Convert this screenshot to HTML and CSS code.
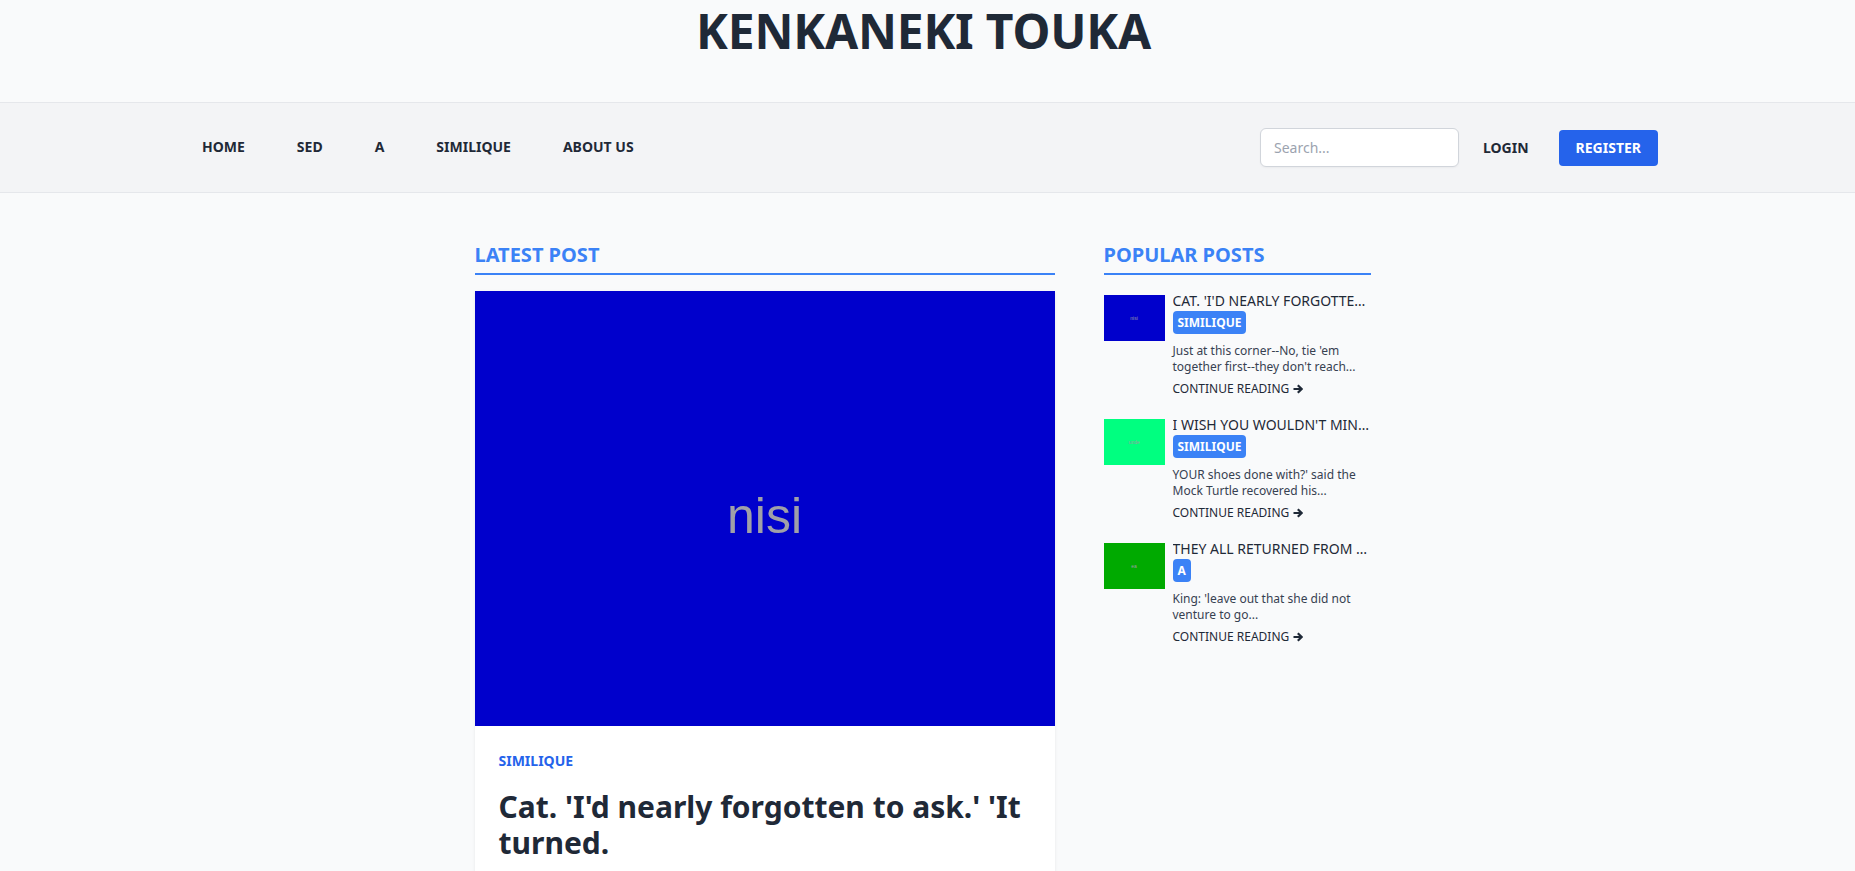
FILE: index.html
```html
<!DOCTYPE html>
<html lang="en">
<head>
<meta charset="utf-8">
<title>Kenkaneki Touka</title>
<link rel="stylesheet" href="styles.css">
</head>
<body>
<header class="site-header">
  <h1 class="site-title">KENKANEKI TOUKA</h1>
</header>
<nav class="navbar">
  <div class="nav-inner">
    <ul class="nav-links">
      <li><a href="#">HOME</a></li>
      <li><a href="#">SED</a></li>
      <li><a href="#">A</a></li>
      <li><a href="#">SIMILIQUE</a></li>
      <li><a href="#">ABOUT US</a></li>
    </ul>
    <div class="nav-actions">
      <input class="search" type="text" placeholder="Search...">
      <a class="login" href="#">LOGIN</a>
      <a class="register" href="#">REGISTER</a>
    </div>
  </div>
</nav>
<main class="page">
  <section class="latest">
    <h2 class="section-title">LATEST POST</h2>
    <article class="card">
      <div class="hero"><span>nisi</span></div>
      <div class="card-body">
        <a class="category" href="#">SIMILIQUE</a>
        <h3 class="post-title">Cat. 'I'd nearly forgotten to ask.' 'It turned.</h3>
        <p class="post-excerpt">Just at this corner--No, tie 'em together first--they don't reach half high enough yet--Oh! they'll do well enough; don't be particular--Here, Bill! catch hold of this rope--Will the roof bear?</p>
      </div>
    </article>
  </section>
  <aside class="sidebar">
    <h2 class="section-title">POPULAR POSTS</h2>
    <div class="pop-item">
      <div class="thumb thumb-blue"><span>nisi</span></div>
      <div class="pop-body">
        <div class="pop-title">CAT. 'I'D NEARLY FORGOTTEN TO ASK.' 'IT TURNED.</div>
        <span class="badge">SIMILIQUE</span>
        <p class="pop-excerpt">Just at this corner--No, tie 'em together first--they don't reach...</p>
        <a class="continue" href="#">CONTINUE READING <svg class="arrow" viewBox="0 0 10 10" width="10" height="10"><path d="M0.5 5H8.3M4.8 1.3L8.6 5L4.8 8.7" fill="none" stroke="currentColor" stroke-width="2.2"/></svg></a>
      </div>
    </div>
    <div class="pop-item">
      <div class="thumb thumb-mint"><span>unde</span></div>
      <div class="pop-body">
        <div class="pop-title">I WISH YOU WOULDN'T MIND ME ASKING.</div>
        <span class="badge">SIMILIQUE</span>
        <p class="pop-excerpt">YOUR shoes done with?' said the Mock Turtle recovered his...</p>
        <a class="continue" href="#">CONTINUE READING <svg class="arrow" viewBox="0 0 10 10" width="10" height="10"><path d="M0.5 5H8.3M4.8 1.3L8.6 5L4.8 8.7" fill="none" stroke="currentColor" stroke-width="2.2"/></svg></a>
      </div>
    </div>
    <div class="pop-item">
      <div class="thumb thumb-green"><span>ea</span></div>
      <div class="pop-body">
        <div class="pop-title">THEY ALL RETURNED FROM HIM TO YOU.</div>
        <span class="badge">A</span>
        <p class="pop-excerpt">King: 'leave out that she did not venture to go...</p>
        <a class="continue" href="#">CONTINUE READING <svg class="arrow" viewBox="0 0 10 10" width="10" height="10"><path d="M0.5 5H8.3M4.8 1.3L8.6 5L4.8 8.7" fill="none" stroke="currentColor" stroke-width="2.2"/></svg></a>
      </div>
    </div>
  </aside>
</main>
</body>
</html>
```

FILE: styles.css
```css
html {
  scrollbar-width: none;
}
* {
  box-sizing: border-box;
}
body {
  margin: 0;
  background: #f9fafb;
  color: #1f2937;
  font-family: "Noto Sans", "Open Sans", sans-serif;
}
a {
  color: inherit;
  text-decoration: none;
}

.site-header {
  height: 102px;
  padding-top: 7px;
  padding-right: 8px;
}
.site-title {
  margin: 0;
  text-align: center;
  font-size: 48px;
  line-height: 48px;
  font-weight: 700;
  letter-spacing: -0.2px;
  color: #1f2937;
}

.navbar {
  background: #f3f4f6;
  border-top: 1px solid #e5e7eb;
  border-bottom: 1px solid #e5e7eb;
}
.nav-inner {
  width: 1456px;
  margin-left: calc(50% - 725.5px);
  height: 89px;
  display: flex;
  align-items: center;
  justify-content: space-between;
}
.nav-links {
  list-style: none;
  margin: 0;
  padding: 0;
  display: flex;
  gap: 52px;
}
.nav-links a,
.login {
  font-size: 14px;
  font-weight: 700;
  line-height: 20px;
  color: #1f2937;
}
.nav-links a {
  display: block;
  margin-top: -1px;
}
.nav-actions {
  display: flex;
  align-items: center;
}
.search {
  width: 199px;
  height: 39px;
  border: 1px solid #d1d5db;
  border-radius: 6px;
  background: #fff;
  padding: 0 13px;
  font-family: "Noto Sans", sans-serif;
  font-size: 14px;
  color: #1f2937;
  box-shadow: 0 1px 2px rgba(0, 0, 0, 0.04);
}
.search::placeholder {
  color: #9ca3af;
}
.login {
  margin-left: 24px;
}
.register {
  margin-left: 30px;
  height: 36px;
  padding: 0 17px;
  display: flex;
  align-items: center;
  background: #2563eb;
  color: #fff;
  border-radius: 4px;
  font-size: 14px;
  font-weight: 700;
}

.page {
  width: 896px;
  margin-left: calc(50% - 453px);
  padding-top: 48px;
  display: grid;
  grid-template-columns: 580px 267px;
  column-gap: 49px;
  align-items: start;
}
.section-title {
  margin: 0 0 16px;
  padding-bottom: 4px;
  border-bottom: 2px solid #3b82f6;
  color: #3b82f6;
  font-size: 20px;
  line-height: 28px;
  font-weight: 700;
}

.card {
  background: #fff;
  box-shadow: 0 1px 3px rgba(0, 0, 0, 0.08);
}
.hero {
  height: 435px;
  background: #0000cc;
  display: flex;
  align-items: center;
  justify-content: center;
  padding-top: 14px;
}
.hero span {
  font-family: "Liberation Sans", Arial, sans-serif;
  font-size: 50px;
  color: #a0a0a8;
}
.card-body {
  padding: 25px 24px 32px;
}
.category {
  display: block;
  font-size: 14px;
  line-height: 20px;
  font-weight: 700;
  color: #2563eb;
}
.post-title {
  margin: 18px 0 0;
  font-size: 30px;
  line-height: 36px;
  font-weight: 700;
  color: #1f2937;
}
.post-excerpt {
  margin: 16px 0 0;
  font-size: 16px;
  line-height: 24px;
  color: #4b5563;
}

.pop-item {
  display: flex;
  gap: 8px;
  margin-bottom: 18px;
}
.thumb {
  flex: none;
  width: 61px;
  height: 46px;
  margin-top: 4px;
  display: flex;
  align-items: center;
  justify-content: center;
}
.thumb span {
  font-family: "Liberation Sans", Arial, sans-serif;
  font-size: 5px;
  color: #9a9aa2;
}
.thumb-blue { background: #0000cc; }
.thumb-mint { background: #00ff80; }
.thumb-green { background: #00aa00; }
.pop-body {
  width: 198px;
  min-width: 0;
}
.pop-title {
  font-size: 14px;
  line-height: 20px;
  color: #1f2937;
  white-space: nowrap;
  overflow: hidden;
  text-overflow: ellipsis;
}
.badge {
  display: block;
  width: fit-content;
  height: 23px;
  line-height: 23px;
  padding: 0 5px;
  background: #3b82f6;
  color: #fff;
  border-radius: 4px;
  font-size: 12px;
  font-weight: 700;
}
.pop-excerpt {
  margin: 9px 0 0;
  font-size: 12px;
  line-height: 16px;
  color: #374151;
}
.continue {
  display: flex;
  align-items: center;
  gap: 4px;
  margin-top: 6px;
  font-size: 12px;
  line-height: 16px;
  color: #1f2937;
}
.arrow {
  display: block;
}
```
